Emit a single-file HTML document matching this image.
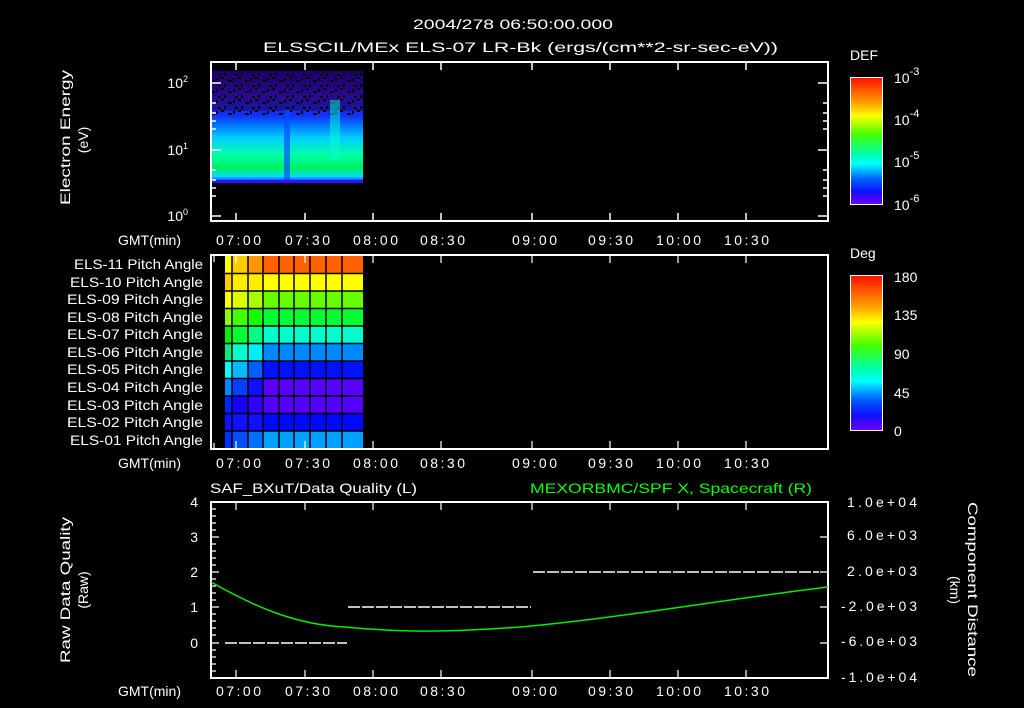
<!DOCTYPE html>
<html><head><meta charset="utf-8"><style>
html,body{margin:0;padding:0;background:#000;}
svg{display:block}
text{font-family:"Liberation Sans",sans-serif;fill:#fff;font-size:14px}
</style></head><body>
<svg width="1024" height="708" viewBox="0 0 1024 708" xmlns="http://www.w3.org/2000/svg">
<defs>
<linearGradient id="def" x1="0" y1="0" x2="0" y2="1">
<stop offset="0" stop-color="#ff1000"/><stop offset="0.2" stop-color="#ffa000"/><stop offset="0.3" stop-color="#ffff00"/><stop offset="0.45" stop-color="#44ff00"/><stop offset="0.6" stop-color="#00ffaa"/><stop offset="0.68" stop-color="#00ffff"/><stop offset="0.8" stop-color="#0060ff"/><stop offset="0.9" stop-color="#1010ff"/><stop offset="1" stop-color="#7000ff"/>
</linearGradient>
<linearGradient id="spec" x1="0" y1="0" x2="0" y2="1">
<stop offset="0" stop-color="#3000a0"/><stop offset="0.25" stop-color="#4010e0"/><stop offset="0.4" stop-color="#1030ff"/><stop offset="0.5" stop-color="#0080ff"/><stop offset="0.6" stop-color="#00ccff"/><stop offset="0.75" stop-color="#00ffaa"/><stop offset="0.88" stop-color="#00ee60"/><stop offset="0.95" stop-color="#00ddff"/><stop offset="1" stop-color="#3010ff"/>
</linearGradient>
<pattern id="speck" width="17" height="11" patternUnits="userSpaceOnUse">
<rect x="0" y="0" width="3" height="2" fill="#000"/><rect x="7" y="3" width="4" height="2" fill="#000"/><rect x="3" y="7" width="2" height="3" fill="#000"/><rect x="12" y="1" width="2" height="3" fill="#000"/><rect x="14" y="8" width="3" height="2" fill="#000"/>
</pattern>
</defs>

<text x="413" y="29" font-size="15" textLength="200" lengthAdjust="spacingAndGlyphs">2004/278 06:50:00.000</text>
<text x="263" y="52" font-size="15" textLength="515" lengthAdjust="spacingAndGlyphs">ELSSCIL/MEx ELS-07 LR-Bk  (ergs/(cm**2-sr-sec-eV))</text>

<rect x="210" y="71" width="153" height="111" fill="url(#spec)"/>
<rect x="210" y="71" width="153" height="40" fill="#000" opacity="0.35"/>
<rect x="210" y="71" width="153" height="45" fill="url(#speck)"/>
<rect x="284" y="110" width="6" height="70" fill="#0050ff" opacity="0.7"/>
<rect x="330" y="100" width="10" height="60" fill="#00ffcc" opacity="0.5"/>
<rect x="210" y="180" width="153" height="3" fill="#3010ff"/>
<rect x="211" y="62" width="617" height="159" fill="none" stroke="#fff" stroke-width="2"/>
<g stroke="#fff" stroke-width="1.5">
<path d="M211 83h10M211 150h10M211 216h10M211 103h5M211 113h5M211 121h5M211 129h5M211 170h5M211 180h5M211 188h5M211 196h5"/>
<path d="M828 83h-10M828 150h-10M828 216h-10M828 103h-5M828 113h-5M828 121h-5M828 129h-5M828 170h-5M828 180h-5M828 188h-5M828 196h-5"/>
<path d="M236 62v8M305 62v8M373 62v8M441 62v8M532 62v8M610 62v8M678 62v8M746 62v8M236 221v-8M305 221v-8M373 221v-8M441 221v-8M532 221v-8M610 221v-8M678 221v-8M746 221v-8"/>
</g>
<text x="188" y="88" text-anchor="end" font-size="13">10<tspan dy="-6" font-size="9">2</tspan></text>
<text x="188" y="155" text-anchor="end" font-size="13">10<tspan dy="-6" font-size="9">1</tspan></text>
<text x="188" y="221" text-anchor="end" font-size="13">10<tspan dy="-6" font-size="9">0</tspan></text>
<text transform="translate(70,205) rotate(-90)" font-size="14" textLength="135" lengthAdjust="spacingAndGlyphs">Electron Energy</text>
<text transform="translate(88,140) rotate(-90)" text-anchor="middle" font-size="14">(eV)</text>

<text x="850" y="60" font-size="16">DEF</text>
<rect x="850.5" y="77.5" width="32" height="127" fill="url(#def)" stroke="#fff"/>
<text x="894" y="83" font-size="17">10<tspan dy="-8" font-size="11">-3</tspan></text>
<text x="894" y="125" font-size="17">10<tspan dy="-8" font-size="11">-4</tspan></text>
<text x="894" y="167" font-size="17">10<tspan dy="-8" font-size="11">-5</tspan></text>
<text x="894" y="210" font-size="17">10<tspan dy="-8" font-size="11">-6</tspan></text>

<g font-size="13">
<text x="118" y="245" textLength="63" lengthAdjust="spacingAndGlyphs">GMT(min)</text>
<text x="216" y="245" textLength="45">07:00</text><text x="285" y="245" textLength="45">07:30</text><text x="353" y="245" textLength="45">08:00</text><text x="420" y="245" textLength="45">08:30</text><text x="512" y="245" textLength="45">09:00</text><text x="588" y="245" textLength="45">09:30</text><text x="656" y="245" textLength="45">10:00</text><text x="724" y="245" textLength="45">10:30</text>
</g>

<g>
<rect x="225" y="256" width="7" height="18" fill="#ffff00"/><rect x="232" y="256" width="16" height="18" fill="#ffcc00"/><rect x="248" y="256" width="15" height="18" fill="#ff9900"/><rect x="263" y="256" width="100" height="18" fill="#ff6000"/>
<rect x="225" y="273.5" width="7" height="18" fill="#ffcc00"/><rect x="232" y="273.5" width="131" height="18" fill="#ffee00"/><rect x="263" y="273.5" width="100" height="18" fill="#ffff00"/>
<rect x="225" y="291" width="7" height="18" fill="#ffff00"/><rect x="232" y="291" width="16" height="18" fill="#ddff00"/><rect x="248" y="291" width="15" height="18" fill="#aaff00"/><rect x="263" y="291" width="100" height="18" fill="#66ff00"/>
<rect x="225" y="308.5" width="7" height="18" fill="#88ff00"/><rect x="232" y="308.5" width="16" height="18" fill="#44ff00"/><rect x="248" y="308.5" width="15" height="18" fill="#11ff00"/><rect x="263" y="308.5" width="100" height="18" fill="#00ff33"/>
<rect x="225" y="326" width="7" height="18" fill="#00ee00"/><rect x="232" y="326" width="16" height="18" fill="#00ff33"/><rect x="248" y="326" width="15" height="18" fill="#00ff88"/><rect x="263" y="326" width="100" height="18" fill="#00ffcc"/>
<rect x="225" y="343.5" width="7" height="18" fill="#00ee88"/><rect x="232" y="343.5" width="16" height="18" fill="#00ffcc"/><rect x="248" y="343.5" width="15" height="18" fill="#00eeff"/><rect x="263" y="343.5" width="100" height="18" fill="#0088ff"/>
<rect x="225" y="361" width="7" height="18" fill="#00ffff"/><rect x="232" y="361" width="16" height="18" fill="#00bbff"/><rect x="248" y="361" width="15" height="18" fill="#0060ff"/><rect x="263" y="361" width="100" height="18" fill="#0011ff"/>
<rect x="225" y="378.5" width="7" height="18" fill="#0088ff"/><rect x="232" y="378.5" width="16" height="18" fill="#0040ff"/><rect x="248" y="378.5" width="15" height="18" fill="#1010ff"/><rect x="263" y="378.5" width="100" height="18" fill="#5a00ff"/>
<rect x="225" y="396" width="7" height="18" fill="#0022ff"/><rect x="232" y="396" width="16" height="18" fill="#1800ff"/><rect x="248" y="396" width="15" height="18" fill="#3300ff"/><rect x="263" y="396" width="100" height="18" fill="#5500ff"/>
<rect x="225" y="413.5" width="138" height="18" fill="#1010ff"/><rect x="263" y="413.5" width="100" height="18" fill="#0008ff"/>
<rect x="225" y="431" width="7" height="18" fill="#0030ff"/><rect x="232" y="431" width="16" height="18" fill="#0050ff"/><rect x="248" y="431" width="15" height="18" fill="#0070ff"/><rect x="263" y="431" width="100" height="18" fill="#00a0ff"/>
<g stroke="#000" stroke-width="1.5">
<path d="M232 256v193M248 256v193M263 256v193M279 256v193M294 256v193M310 256v193M326 256v193M342 256v193"/>
<path d="M225 273.5h138M225 291h138M225 308.5h138M225 326h138M225 343.5h138M225 361h138M225 378.5h138M225 396h138M225 413.5h138M225 431h138"/>
</g>
</g>
<rect x="211" y="255" width="617" height="194" fill="none" stroke="#fff" stroke-width="2"/>
<g stroke="#fff" stroke-width="1.2">
<path d="M214 256v6M214 449v-6M236 449v-8M305 449v-8M373 449v-8M441 449v-8M532 449v-8M610 449v-8M678 449v-8M746 449v-8M236 255v8M305 255v8M373 255v8M441 255v8M532 255v8M610 255v8M678 255v8M746 255v8"/>
</g>
<g font-size="13">
<text x="74" y="269" textLength="129" lengthAdjust="spacingAndGlyphs">ELS-11 Pitch Angle</text>
<text x="70" y="287" textLength="133" lengthAdjust="spacingAndGlyphs">ELS-10 Pitch Angle</text>
<text x="67" y="304" textLength="136" lengthAdjust="spacingAndGlyphs">ELS-09 Pitch Angle</text>
<text x="67" y="322" textLength="136" lengthAdjust="spacingAndGlyphs">ELS-08 Pitch Angle</text>
<text x="67" y="339" textLength="136" lengthAdjust="spacingAndGlyphs">ELS-07 Pitch Angle</text>
<text x="67" y="357" textLength="136" lengthAdjust="spacingAndGlyphs">ELS-06 Pitch Angle</text>
<text x="67" y="374" textLength="136" lengthAdjust="spacingAndGlyphs">ELS-05 Pitch Angle</text>
<text x="67" y="392" textLength="136" lengthAdjust="spacingAndGlyphs">ELS-04 Pitch Angle</text>
<text x="67" y="410" textLength="136" lengthAdjust="spacingAndGlyphs">ELS-03 Pitch Angle</text>
<text x="67" y="427" textLength="136" lengthAdjust="spacingAndGlyphs">ELS-02 Pitch Angle</text>
<text x="70" y="445" textLength="133" lengthAdjust="spacingAndGlyphs">ELS-01 Pitch Angle</text>
</g>
<text x="850" y="258" font-size="16">Deg</text>
<rect x="850.5" y="275.5" width="32" height="155" fill="url(#def)" stroke="#fff"/>
<g font-size="16"><text x="894" y="282">180</text><text x="894" y="320">135</text><text x="894" y="359">90</text><text x="894" y="398">45</text><text x="894" y="436">0</text></g>
<g font-size="13">
<text x="118" y="468" textLength="63" lengthAdjust="spacingAndGlyphs">GMT(min)</text>
<text x="216" y="468" textLength="45">07:00</text><text x="285" y="468" textLength="45">07:30</text><text x="353" y="468" textLength="45">08:00</text><text x="420" y="468" textLength="45">08:30</text><text x="512" y="468" textLength="45">09:00</text><text x="588" y="468" textLength="45">09:30</text><text x="656" y="468" textLength="45">10:00</text><text x="724" y="468" textLength="45">10:30</text>
</g>

<text x="210" y="493" font-size="15" textLength="207" lengthAdjust="spacingAndGlyphs">SAF_BXuT/Data Quality (L)</text>
<text x="530" y="493" font-size="15" style="fill:#00ff00" textLength="282" lengthAdjust="spacingAndGlyphs">MEXORBMC/SPF X, Spacecraft (R)</text>
<rect x="211" y="502" width="617" height="176" fill="none" stroke="#fff" stroke-width="2"/>
<g stroke="#fff" stroke-width="1.2">
<path d="M211 537h8M211 572h8M211 607h8M211 643h8M211 509h5M211 516h5M211 523h5M211 530h5M211 544h5M211 551h5M211 558h5M211 565h5M211 579h5M211 586h5M211 593h5M211 600h5M211 614h5M211 621h5M211 628h5M211 635h5M211 650h5M211 657h5M211 664h5M211 671h5"/>
<path d="M828 537h-8M828 572h-8M828 607h-8M828 643h-8"/>
<path d="M236 502v8M305 502v8M373 502v8M441 502v8M532 502v8M610 502v8M678 502v8M746 502v8M236 678v-8M305 678v-8M373 678v-8M441 678v-8M532 678v-8M610 678v-8M678 678v-8M746 678v-8"/>
</g>
<g stroke="#fff" stroke-width="1.5" stroke-dasharray="12,2">
<path d="M225 643h122M348 607h183M533 572h286"/>
</g>
<path d="M211 582 C260 610 300 625 345 627 C400 632 440 633 520 627 C620 618 720 600 828 587" fill="none" stroke="#00ee00" stroke-width="1.5"/>
<g font-size="14" text-anchor="end"><text x="198" y="507">4</text><text x="198" y="542">3</text><text x="198" y="577">2</text><text x="198" y="612">1</text><text x="198" y="648">0</text></g>
<g font-size="12">
<text x="847" y="507" textLength="70">1.0e+04</text><text x="847" y="540" textLength="70">6.0e+03</text><text x="847" y="576" textLength="70">2.0e+03</text><text x="841" y="611" textLength="76">-2.0e+03</text><text x="841" y="646" textLength="76">-6.0e+03</text><text x="841" y="682" textLength="76">-1.0e+04</text></g>
<text transform="translate(70,663) rotate(-90)" font-size="14" textLength="146" lengthAdjust="spacingAndGlyphs">Raw Data Quality</text>
<text transform="translate(88,590) rotate(-90)" text-anchor="middle" font-size="14">(Raw)</text>
<text transform="translate(968,502) rotate(90)" font-size="14" textLength="175" lengthAdjust="spacingAndGlyphs">Component Distance</text>
<text transform="translate(950,590) rotate(90)" text-anchor="middle" font-size="14">(km)</text>
<g font-size="13">
<text x="118" y="696" textLength="63" lengthAdjust="spacingAndGlyphs">GMT(min)</text>
<text x="216" y="696" textLength="45">07:00</text><text x="285" y="696" textLength="45">07:30</text><text x="353" y="696" textLength="45">08:00</text><text x="420" y="696" textLength="45">08:30</text><text x="512" y="696" textLength="45">09:00</text><text x="588" y="696" textLength="45">09:30</text><text x="656" y="696" textLength="45">10:00</text><text x="724" y="696" textLength="45">10:30</text>
</g>
</svg>
</body></html>
